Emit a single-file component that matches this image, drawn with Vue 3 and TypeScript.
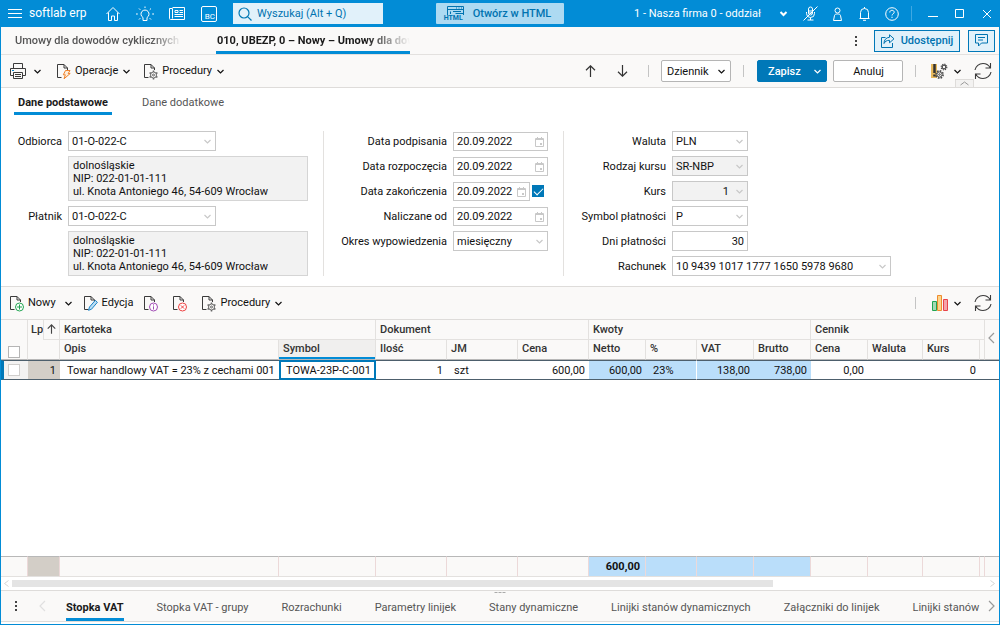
<script setup lang="ts">
import { h, ref } from 'vue'

const chevronPaths: Record<string, string> = {
  down: 'M1.500 3l3 3 3-3',
  left: 'M7 1l-5 5 5 5',
  right: 'M2 1l5 5-5 5',
}

const Chevron = (props: { dir?: string; bold?: boolean }) => {
  const dir = props.dir ?? 'down'
  const height = dir === 'down' ? 9 : 12
  return h(
    'svg',
    {
      width: 9,
      height,
      viewBox: `0 0 9 ${height}`,
      fill: 'none',
      stroke: 'currentColor',
      'stroke-width': props.bold ? 2 : 1.2,
      'aria-hidden': 'true',
    },
    [h('path', { d: chevronPaths[dir] })],
  )
}
Chevron.props = { dir: String, bold: Boolean }

const DocIcon = (props: { kind: string }) => {
  const line = (d: string, stroke: string, extra = {}) => h('path', { d, stroke, ...extra })
  const base = line('M5.500 14.500H1.500V1.500h6.500l3.500 3.500V7M8 1.500v3.500h3.500', '#3b3b3b')
  const badge = (stroke: string, d: string) => [
    h('circle', { cx: 10.5, cy: 12, r: 4, stroke, fill: '#fff' }),
    line(d, stroke),
  ]
  const kinds: Record<string, unknown[]> = {
    bolt: [line('M9.500 7.500h4.500l-1.800 3h2L8 15.800l1.300-4h-2z', '#f0832b', { fill: '#fdeedd' })],
    gear: [
      h('circle', { cx: 10.5, cy: 12, r: 3, stroke: '#666', fill: '#faf9f8' }),
      h('circle', { cx: 10.5, cy: 12, r: 1, stroke: '#666' }),
      line('M10.500 7.500v1.500M10.500 15v1.500M6.600 9.700l1.300.8M13.100 13.500l1.300.8M6.600 14.300l1.300-.8M13.100 10.500l1.300-.8', '#666', { 'stroke-width': 1.5 }),
    ],
    add: badge('#21a552', 'M10.500 9.500v5M8 12h5'),
    info: badge('#a24db5', 'M10.500 9.300v1.200M10.500 11.300v3.200'),
    remove: badge('#ee4040', 'M8.900 10.400l3.200 3.200M12.100 10.400l-3.200 3.200'),
    edit: [line('M5.500 15.300l1-3.300L12.300 5.300l2.100 2L8.500 14.200z', '#1c83c6', { fill: '#bcdff5' })],
  }
  return h(
    'svg',
    { width: 15, height: 17, viewBox: '0 0 15 17', fill: 'none', 'stroke-width': 1, 'aria-hidden': 'true' },
    [base, ...(kinds[props.kind] as [])],
  )
}
DocIcon.props = { kind: String }

const RefreshIcon = () =>
  h(
    'svg',
    { width: 18, height: 18, viewBox: '0 0 18 18', fill: 'none', stroke: '#3b3b3b', 'stroke-width': 1.1, 'aria-hidden': 'true' },
    [h('path', { d: 'M1 8C1.6 4.200 5 1.500 9 1.500c3 0 5.600 1.500 7 4M16.500 1v5h-5M17 10c-.6 3.800-4 6.500-8 6.500-3 0-5.600-1.500-7-4M1.500 17v-5h5' })],
  )

const parties = [
  { id: 'odbiorca', label: 'Odbiorca' },
  { id: 'platnik', label: 'Płatnik' },
]

const dates = [
  { id: 'podpisania', label: 'Data podpisania', check: false },
  { id: 'rozpoczecia', label: 'Data rozpoczęcia', check: false },
  { id: 'zakonczenia', label: 'Data zakończenia', check: true },
  { id: 'naliczane', label: 'Naliczane od', check: false },
]

const payments = [
  { id: 'waluta', label: 'Waluta', value: 'PLN' },
  { id: 'rodzaj', label: 'Rodzaj kursu', value: 'SR-NBP', off: true },
  { id: 'kurs', label: 'Kurs', value: '1', off: true, right: true },
  { id: 'symbol', label: 'Symbol płatności', value: 'P' },
  { id: 'dni', label: 'Dni płatności', value: '30', right: true, plain: true },
  { id: 'rachunek', label: 'Rachunek', value: '10 9439 1017 1777 1650 5978 9680', wide: true },
]

const groups = [
  { label: 'Kartoteka', span: 2 },
  { label: 'Dokument', span: 3 },
  { label: 'Kwoty', span: 4 },
  { label: 'Cennik', span: 4 },
]

const columns = [
  { label: 'Opis', value: 'Towar handlowy VAT = 23% z cechami 001', cls: '' },
  { label: 'Symbol', value: 'TOWA-23P-C-001', cls: 'focused' },
  { label: 'Ilość', value: '1', cls: 'num' },
  { label: 'JM', value: 'szt', cls: '' },
  { label: 'Cena', value: '600,00', cls: 'num' },
  { label: 'Netto', value: '600,00', cls: 'num blue', total: '600,00' },
  { label: '%', value: '23%', cls: 'blue split' },
  { label: 'VAT', value: '138,00', cls: 'num blue' },
  { label: 'Brutto', value: '738,00', cls: 'num blue' },
  { label: 'Cena', value: '0,00', cls: 'num' },
  { label: 'Waluta', value: '', cls: '' },
  { label: 'Kurs', value: '0', cls: 'num' },
  { label: '', value: '', cls: '' },
]

const bottomTabs = [
  'Stopka VAT',
  'Stopka VAT - grupy',
  'Rozrachunki',
  'Parametry linijek',
  'Stany dynamiczne',
  'Linijki stanów dynamicznych',
  'Załączniki do linijek',
  'Linijki stanów',
]
const activeBottom = ref(0)
const endChecked = ref(true)
</script>

<template>
  <div class="window">
    <header class="topbar">
      <div class="top-left">
        <button class="menu" aria-label="Menu">
          <svg width="14" height="10" viewBox="0 0 14 10" stroke="#fff"><path d="M0 .5h14M0 4.500h14M0 8.500h14" /></svg>
        </button>
        <a class="brand" href="#">softlab erp</a>
        <button class="top-icon" aria-label="Start">
          <svg width="16" height="16" viewBox="0 0 16 16" fill="none" stroke="#fff"><path d="M1.500 8L8 1.500 14.500 8M3.500 6.500v8h3V10h3v4.500h3v-8" /></svg>
        </button>
        <button class="top-icon" aria-label="Podpowiedzi">
          <svg width="20" height="16" viewBox="0 0 20 16" fill="none" stroke="#fff"><path d="M8 11.500a4 4 0 1 1 4 0v3H8zM10 .5v1.500M4 2.500l1.300 1.300M16 2.500l-1.300 1.300M1 8h1.800M17.200 8H19M4 13.500l1.300-1.300M16 13.500l-1.300-1.300" /></svg>
        </button>
        <button class="top-icon" aria-label="Aktualności">
          <svg width="17" height="14" viewBox="0 0 17 14" fill="none" stroke="#fff"><path d="M3.500.5h12v12H1.500a1 1 0 0 1-1-1v-10h3v10M5.500 9.500h8.500M5.500 7.500h8.500M10.500 3.500H14M10.500 5.500H14M6 3.500h3v2H6z" /></svg>
        </button>
        <button class="top-icon" aria-label="BC"><span class="bc">BC</span></button>
        <label class="search">
          <svg width="14" height="14" viewBox="0 0 14 14" fill="none" stroke="#0078b4" stroke-width="1.200"><circle cx="6" cy="6" r="5" /><path d="M9.800 9.800l3.700 3.700" /></svg>
          <input type="search" aria-label="Wyszukaj" placeholder="Wyszukaj (Alt + Q)" />
        </label>
      </div>
      <button class="html-btn">
        <span class="html-icon">
          <svg width="17" height="9" viewBox="0 0 17 9" fill="none" stroke="#0073b0"><path d="M.5 9V.5h16V9M.5 3.500h16M3.500 8V5.500M6 5.500h8M8.500 7.500h8M9 2h1M11.500 2h1M14 2h1" /></svg>
          <small>HTML</small>
        </span>
        Otwórz w HTML
      </button>
      <div class="top-right">
        <button class="company">1 - Nasza firma 0 - oddział <Chevron bold /></button>
        <button class="sys" aria-label="Mikrofon">
          <svg width="15" height="15" viewBox="0 0 15 15" fill="none" stroke="#fff"><path d="M5.500 3a2 2 0 0 1 4 0v4a2 2 0 0 1-4 0zM3.500 6v1.500a4 4 0 0 0 8 0V6M7.500 11.500v2.500M4.500 14h6M14.500.5l-14 14M5.500 5h4M5.500 7h4" /></svg>
        </button>
        <button class="sys" aria-label="Użytkownik">
          <svg width="11" height="14" viewBox="0 0 11 14" fill="none" stroke="#fff"><circle cx="5.500" cy="3.500" r="2.500" /><path d="M1.500 13.500l1-5c0-1 1.300-1.500 3-1.500s3 .5 3 1.500l1 5z" /></svg>
        </button>
        <button class="sys" aria-label="Powiadomienia">
          <svg width="11" height="14" viewBox="0 0 11 14" fill="none" stroke="#fff"><path d="M.5 11.500h10M1.500 11V5.500a4 4 0 0 1 8 0V11M4 13.300h3M5.500 0v1.500" /></svg>
        </button>
        <button class="sys" aria-label="Pomoc">
          <svg width="14" height="14" viewBox="0 0 14 14" fill="none" stroke="#fff"><circle cx="7" cy="7" r="6.300" /><path d="M4.800 5.500c0-1.500 1-2.200 2.200-2.200s2.200.7 2.200 2c0 1.500-2.200 1.600-2.200 3.200M7 9.700v1.300" /></svg>
        </button>
        <i class="top-sep"></i>
        <button class="sys" aria-label="Minimalizuj">
          <svg width="10" height="10" viewBox="0 0 10 10" stroke="#fff"><path d="M0 7.500h10" /></svg>
        </button>
        <button class="sys" aria-label="Maksymalizuj">
          <svg width="10" height="10" viewBox="0 0 10 10" fill="none" stroke="#fff"><path d="M.5.5h8v8h-8z" /></svg>
        </button>
        <button class="sys" aria-label="Zamknij">
          <svg width="10" height="10" viewBox="0 0 10 10" stroke="#fff"><path d="M1 1l8 8M9 1L1 9" /></svg>
        </button>
      </div>
    </header>

    <nav class="docs">
      <a class="doc" href="#"><span>Umowy dla dowodów cyklicznych</span></a>
      <a class="doc current" href="#"><span>010, UBEZP, 0 – Nowy – Umowy dla dowodów</span></a>
      <button class="kebab push" aria-label="Więcej"><i></i><i></i><i></i></button>
      <button class="share">
        <svg width="14" height="14" viewBox="0 0 14 14" fill="none" stroke="#0073b0"><path d="M4.500 3.500h-4v10h11V9M8.500.8l4.500 4-4.500 4V6.300C5.500 6.300 4 7.500 3 9.500 3 6 5 3.500 8.500 3.300z" /></svg>
        Udostępnij
      </button>
      <button class="chat" aria-label="Komentarze">
        <svg width="15" height="13" viewBox="0 0 15 13" fill="none" stroke="#0073b0"><path d="M1.500.5h12v8.500h-6l-3 3V9h-3zM4 3.500h7M4 6h5" /></svg>
      </button>
    </nav>

    <div class="toolbar first">
      <button class="tool print" aria-label="Drukuj">
        <svg width="16" height="16" viewBox="0 0 16 16" fill="none" stroke="#3b3b3b"><path d="M3.500 5V.5h9V5M3.500 12.500h-3v-7h15v7h-3M3.500 9.500h9v6h-9zM5 11.500h6M5 13.500h6" /><path d="M2 7.500h2" stroke="#0a84c9" /></svg>
        <Chevron />
      </button>
      <button class="tool"><DocIcon kind="bolt" /><span>Operacje</span><Chevron /></button>
      <button class="tool"><DocIcon kind="gear" /><span>Procedury</span><Chevron /></button>
      <div class="tool-right">
        <button class="arrow" aria-label="Poprzedni">
          <svg width="11" height="12" viewBox="0 0 11 12" fill="none" stroke="#333" stroke-width="1.200"><path d="M5.500 12V1M1 5.200L5.500.8 10 5.200" /></svg>
        </button>
        <button class="arrow" aria-label="Następny">
          <svg width="11" height="12" viewBox="0 0 11 12" fill="none" stroke="#333" stroke-width="1.200"><path d="M5.500 0v11M1 6.800l4.500 4.400L10 6.800" /></svg>
        </button>
        <i class="sep"></i>
        <button class="btn journal">Dziennik <Chevron /></button>
        <i class="sep"></i>
        <button class="btn primary"><span>Zapisz</span><Chevron /></button>
        <button class="btn cancel">Anuluj</button>
        <i class="sep"></i>
        <button class="tool-end" aria-label="Ustawienia">
          <svg width="17" height="17" viewBox="0 0 17 17" fill="none" stroke="#4a4a4a"><path d="M0 1h6v14H0z" fill="#e8b95c" stroke="none" /><path d="M3.500 1v9M3.500 11.500v2" stroke="#333" stroke-width="2.500" /><circle cx="8.500" cy="11.500" r="3.600" stroke-dasharray="1.600 1.200" stroke-width="1.600" /><circle cx="8.500" cy="11.500" r="2.600" fill="#faf9f8" /><circle cx="8.500" cy="11.500" r=".8" /><circle cx="13" cy="4" r="2.800" stroke-dasharray="1.200 1" stroke-width="1.200" /><circle cx="13" cy="4" r="1.800" stroke-width="1.200" fill="#faf9f8" /></svg>
          <Chevron />
        </button>
        <button class="refresh" aria-label="Odśwież"><RefreshIcon /></button>
      </div>
      <button class="fold" aria-label="Zwiń">
        <svg width="9" height="5" viewBox="0 0 9 5" fill="none" stroke="#999"><path d="M.5 4l4-3 4 3" /></svg>
      </button>
    </div>

    <nav class="subtabs">
      <a class="on" href="#">Dane podstawowe</a>
      <a href="#">Dane dodatkowe</a>
    </nav>

    <form class="form">
      <section class="fields parties">
        <template v-for="p in parties" :key="p.id">
          <label :for="p.id">{{ p.label }}</label>
          <div class="combo party">
            <select :id="p.id"><option>01-O-022-C</option></select>
            <Chevron />
          </div>
          <div class="address">dolnośląskie<br />NIP: 022-01-01-111<br />ul. Knota Antoniego 46, 54-609 Wrocław</div>
        </template>
      </section>

      <section class="fields terms">
        <template v-for="d in dates" :key="d.id">
          <label :for="d.id">{{ d.label }}</label>
          <div class="date-row">
            <div class="combo date">
              <input :id="d.id" type="text" value="20.09.2022" />
              <svg width="9" height="10" viewBox="0 0 9 10" fill="none" stroke="#c8c8c8"><path d="M.5 1.500h8v8h-8zM.5 2.500h8M2.500 0v2M6.500 0v2" /><path d="M5 6h2v2H5z" fill="#c8c8c8" stroke="none" /></svg>
            </div>
            <input v-if="d.check" v-model="endChecked" type="checkbox" class="tick" aria-label="Data zakończenia aktywna" />
          </div>
        </template>
        <label for="okres">Okres wypowiedzenia</label>
        <div class="combo">
          <select id="okres"><option>miesięczny</option></select>
          <Chevron />
        </div>
      </section>

      <section class="fields payment">
        <template v-for="f in payments" :key="f.id">
          <label :for="f.id">{{ f.label }}</label>
          <div class="combo" :class="{ off: f.off, wide: f.wide, right: f.right, plain: f.plain }">
            <input v-if="f.plain || f.right" :id="f.id" type="text" :value="f.value" :disabled="f.off" />
            <select v-else :id="f.id" :disabled="f.off"><option>{{ f.value }}</option></select>
            <Chevron v-if="!f.plain" />
          </div>
        </template>
      </section>
    </form>

    <div class="toolbar second">
      <button class="tool new"><DocIcon kind="add" /><span>Nowy</span><Chevron /></button>
      <button class="tool"><DocIcon kind="edit" /><span>Edycja</span></button>
      <button class="tool icon-only" aria-label="Informacje"><DocIcon kind="info" /></button>
      <button class="tool icon-only" aria-label="Usuń"><DocIcon kind="remove" /></button>
      <button class="tool"><DocIcon kind="gear" /><span>Procedury</span><Chevron /></button>
      <div class="tool-right">
        <i class="sep"></i>
        <button class="tool-end" aria-label="Wykres">
          <svg width="17" height="16" viewBox="0 0 17 16"><path d="M1.500 6.500h4v9h-4z" fill="#a5d9b5" stroke="#21a552" /><path d="M6.500.5h4v15h-4z" fill="#fbd58d" stroke="#ef8b2c" /><path d="M12.500 4.500h4v11h-4z" fill="#f5a3a8" stroke="#e8434b" /></svg>
          <Chevron />
        </button>
        <button class="refresh" aria-label="Odśwież"><RefreshIcon /></button>
      </div>
    </div>

    <div class="grid">
      <table>
        <colgroup>
          <col class="c-check" /><col class="c-lp" /><col class="c-desc" /><col class="c-symbol" />
          <col class="c-doc" /><col class="c-doc" /><col class="c-doc" />
          <col class="c-sum" /><col class="c-pct" /><col class="c-sum" /><col class="c-sum" />
          <col class="c-sum" /><col class="c-cur" /><col class="c-sum" /><col class="c-rest" /><col class="c-nav" />
        </colgroup>
        <thead>
          <tr>
            <th rowspan="2" class="check-head"><input type="checkbox" aria-label="Zaznacz wszystkie" /></th>
            <th rowspan="2" class="lp-head">
              <div>
                <span>Lp</span>
                <svg width="16" height="19" viewBox="0 0 16 19" fill="none" stroke="#444" stroke-width="1.200"><path d="M8 14V4.500M4 8.500l4-4 4 4" /></svg>
              </div>
            </th>
            <th v-for="g in groups" :key="g.label" :colspan="g.span">{{ g.label }}</th>
            <th rowspan="2" class="nav-head"><button aria-label="Przewiń w lewo"><Chevron dir="left" /></button></th>
          </tr>
          <tr>
            <th v-for="(c, i) in columns.slice(0, 12)" :key="i" :class="c.cls">{{ c.label }}</th>
            <th></th>
          </tr>
        </thead>
        <tbody>
          <tr class="row">
            <td class="check-cell"><input type="checkbox" aria-label="Zaznacz pozycję 1" /></td>
            <td class="lp-cell">1</td>
            <td v-for="(c, i) in columns" :key="i" :class="c.cls">{{ c.value }}</td>
            <td></td>
          </tr>
          <tr class="filler"><td colspan="16"></td></tr>
        </tbody>
        <tfoot>
          <tr>
            <td></td>
            <td class="lp-cell"></td>
            <td v-for="(c, i) in columns" :key="i" :class="c.cls">{{ c.total }}</td>
            <td></td>
          </tr>
        </tfoot>
      </table>
    </div>

    <div class="scroller">
      <svg width="5" height="7" viewBox="0 0 5 7" fill="none" stroke="#d5d5d5"><path d="M4.500.5l-4 3 4 3" /></svg>
      <div class="track"><div class="thumb"></div></div>
      <svg width="5" height="7" viewBox="0 0 5 7" fill="none" stroke="#d5d5d5"><path d="M.5.5l4 3-4 3" /></svg>
    </div>

    <nav class="bottom">
      <i class="grip"></i>
      <button class="kebab" aria-label="Więcej kart"><i></i><i></i><i></i></button>
      <button class="prev" aria-label="Poprzednie karty"><Chevron dir="left" /></button>
      <div class="tabs">
        <button v-for="(t, i) in bottomTabs" :key="t" :class="{ on: i === activeBottom }" @click="activeBottom = i">{{ t }}</button>
      </div>
      <button class="next" aria-label="Następne karty"><Chevron dir="right" /></button>
    </nav>
  </div>
</template>

<style>
body {
  margin: 0;
}
</style>

<style scoped>
* {
  box-sizing: border-box;
}
.window {
  display: flex;
  flex-direction: column;
  min-height: 100vh;
  border: 1px solid #028cd6;
  border-top: 0;
  background: #fff;
  color: #111;
  font-family: Roboto, "Liberation Sans", sans-serif;
  font-size: 11px;
  line-height: 13px;
}
button,
input,
select {
  margin: 0;
  padding: 0;
  border: 0;
  background: none;
  color: inherit;
  font: inherit;
}
a {
  color: inherit;
  text-decoration: none;
}
svg {
  display: block;
  flex: none;
}

/* top bar */
.topbar {
  display: grid;
  grid-template-columns: 1fr auto 1fr;
  align-items: center;
  height: 27px;
  margin: 0 -1px;
  background: #028cd6;
  color: #fff;
}
.top-left,
.top-right {
  display: flex;
  align-items: center;
}
.top-right {
  justify-content: flex-end;
}
.menu {
  margin: 0 7px 0 8px;
}
.brand {
  width: 59px;
  margin-right: 9px;
  font-size: 12px;
  white-space: nowrap;
}
.top-icon {
  display: flex;
  justify-content: center;
  width: 32px;
}
.bc {
  display: flex;
  align-items: flex-end;
  justify-content: flex-end;
  width: 16px;
  height: 16px;
  padding-right: 1px;
  border: 1px solid #fff;
  border-radius: 2px;
  font-size: 8px;
  line-height: 9px;
}
.search {
  display: flex;
  align-items: center;
  gap: 5px;
  width: 150px;
  height: 21px;
  margin-left: 8px;
  padding-left: 5px;
  background: #e1f1fa;
  color: #0073b0;
}
.search input {
  flex: 1;
  min-width: 0;
  outline: 0;
}
.search input::placeholder {
  color: #0073b0;
}
.html-btn {
  display: flex;
  align-items: center;
  gap: 9px;
  height: 21px;
  padding: 0 13px 0 8px;
  border-radius: 1px;
  background: #addaf2;
  color: #0073b0;
  font-weight: 500;
}
.html-icon {
  display: flex;
  flex-direction: column;
  align-items: flex-end;
  width: 20px;
}
.html-icon small {
  align-self: flex-start;
  font-size: 7px;
  font-weight: 700;
  line-height: 7px;
}
.company {
  display: flex;
  align-items: center;
  gap: 18px;
  padding-right: 9px;
  white-space: nowrap;
}
.sys {
  display: flex;
  justify-content: center;
  width: 27px;
}
.top-sep {
  width: 1px;
  height: 15px;
  margin: 0 7px 0 6px;
  background: #3fa8e2;
}

/* document tabs */
.docs {
  display: flex;
  align-items: center;
  height: 28px;
  padding-right: 4px;
  border-bottom: 1px solid #e3e1df;
  background: #faf9f8;
}
.doc {
  align-self: stretch;
  margin-left: 14px;
  width: 167px;
  color: #555;
  font-weight: 500;
  line-height: 28px;
}
.doc span {
  display: block;
  overflow: hidden;
  white-space: nowrap;
  mask-image: linear-gradient(to right, #000 calc(100% - 30px), transparent);
}
.doc.current {
  width: 194px;
  height: 27px;
  margin-left: 34px;
  border-bottom: 3px solid #028cd6;
  color: #1b1b1b;
  font-weight: 700;
}
.doc.current span {
  height: 24px;
  padding-left: 1px;
  mask-image: linear-gradient(to right, #000 calc(100% - 44px), transparent);
}
.kebab {
  display: flex;
  flex-direction: column;
  gap: 2px;
  padding: 0 4px;
}
.kebab i {
  width: 2px;
  height: 2px;
  background: #444;
}
.push {
  margin: 0 13px 0 auto;
}
.share,
.chat {
  display: flex;
  align-items: center;
  justify-content: center;
  height: 22px;
  border: 1px solid #0078b8;
  background: #e1f1fa;
  color: #0073b0;
  font-weight: 500;
}
.share {
  gap: 6px;
  width: 86px;
  margin-right: 8px;
}
.chat {
  width: 27px;
}

/* toolbars */
.toolbar {
  position: relative;
  display: flex;
  align-items: center;
  gap: 12px;
  height: 33px;
  padding: 0 7px 0 9px;
  border-bottom: 1px solid #dedcda;
  background: #faf9f8;
}
.toolbar.second {
  height: 34px;
  gap: 10px;
  padding-left: 8px;
  border-top: 1px solid #dedcda;
}
.tool {
  display: flex;
  align-items: center;
  gap: 4px;
}
.tool span {
  padding-bottom: 2px;
}
.tool.print {
  gap: 7px;
  margin-right: 2px;
}
.tool.new span {
  padding-right: 4px;
}
.tool.icon-only {
  margin-right: 4px;
}
.tool-right {
  display: flex;
  align-items: center;
  margin-left: auto;
}
.arrow {
  display: flex;
  justify-content: center;
  width: 32px;
}
.sep {
  width: 1px;
  height: 12px;
  margin: 0 13px 0 12px;
  background: #c4c4c4;
}
.arrow + .sep {
  margin-left: 10px;
  margin-right: 12px;
}
.btn {
  display: flex;
  align-items: center;
  justify-content: space-between;
  width: 70px;
  height: 22px;
  padding: 0 4px 0 5px;
  border: 1px solid #b5b5b5;
  border-radius: 2px;
  background: #fff;
}
.btn.primary {
  margin-right: 6px;
  padding-left: 10px;
  border-color: #0078b8;
  background: #0078b8;
  color: #fff;
  font-weight: 500;
}
.btn.cancel {
  justify-content: center;
}
.tool-end {
  display: flex;
  align-items: center;
  gap: 5px;
  margin: 0 12px 0 2px;
}
.fold {
  position: absolute;
  right: 25px;
  bottom: 0;
  display: flex;
  justify-content: center;
  align-items: center;
  width: 19px;
  height: 8px;
  border: 1px solid #dedcda;
  border-bottom: 0;
  background: #f3f2f1;
}

/* form tabs */
.subtabs {
  display: flex;
  gap: 26px;
  height: 27px;
  padding: 0 13px;
  line-height: 29px;
}
.subtabs a {
  padding: 0 4px;
  color: #555;
}
.subtabs a.on {
  border-bottom: 3px solid #028cd6;
  color: #1b1b1b;
  font-weight: 700;
}

/* form */
.form {
  display: flex;
  padding: 16px 0 10px;
}
.fields {
  display: grid;
  grid-auto-rows: 20px;
  gap: 5px 6px;
}
.fields + .fields {
  border-left: 1px solid #e3e1df;
}
.fields > label {
  line-height: 22px;
  text-align: right;
  white-space: nowrap;
}
.parties {
  grid-template: 20px 45px 20px 45px / 61px 240px;
  margin-right: 15px;
}
.terms {
  grid-template-columns: 123px 95px;
  padding-right: 15px;
}
.payment {
  grid-template-columns: 102px 219px;
}
.combo {
  position: relative;
  display: flex;
  align-items: center;
  min-width: 0;
  height: 20px;
  border: 1px solid #c8c8c8;
  background: #fff;
  color: #111;
}
.combo select,
.combo input {
  flex: 1;
  width: 100%;
  height: 100%;
  padding: 0 18px 0 3px;
  appearance: none;
  opacity: 1;
}
.combo > svg {
  position: absolute;
  right: 3px;
  color: #c8c8c8;
  pointer-events: none;
}
.combo.party {
  width: 148px;
}
.payment .combo {
  width: 76px;
}
.payment .combo.wide {
  width: 219px;
}
.combo.off {
  background: #f2f2f2;
}
.combo.right input {
  text-align: right;
}
.combo.plain input {
  padding-right: 3px;
}
.date-row {
  display: flex;
  align-items: flex-end;
  gap: 2px;
}
.combo.date {
  flex: 1;
  height: 19px;
}
.combo.date input {
  padding-right: 14px;
}
.tick {
  width: 12px;
  height: 12px;
  margin-right: 4px;
  align-self: center;
  appearance: none;
  border: 1px solid #0078b8;
}
.tick:checked {
  background: #0078b8;
}
.tick:checked::before {
  content: "";
  display: block;
  width: 8px;
  height: 4px;
  margin: 2px 1px;
  border: solid #fff;
  border-width: 0 0 1px 1px;
  transform: rotate(-45deg);
}
.address {
  grid-column: 2;
  padding: 2px 4px;
  border: 1px solid #d5d5d5;
  background: #f2f2f2;
  line-height: 13px;
}

/* data grid */
.grid {
  display: grid;
  flex: 1;
}
table {
  width: 100%;
  height: 100%;
  border-spacing: 0;
  table-layout: fixed;
}
.c-check { width: 27px; }
.c-lp { width: 32px; }
.c-desc { width: 219px; }
.c-symbol { width: 97px; }
.c-doc { width: 71px; }
.c-sum { width: 57px; }
.c-pct { width: 51px; }
.c-cur { width: 55px; }
.c-rest { width: 5px; }
.c-nav { width: 14px; }
th,
td {
  height: 20px;
  padding: 0;
  overflow: hidden;
  white-space: nowrap;
}
th {
  padding-left: 4px;
  border-right: 1px solid #e3e1df;
  border-bottom: 1px solid #e3e1df;
  background: #faf9f8;
  color: #333;
  font-weight: 500;
  text-align: left;
}
thead tr + tr th,
th[rowspan] {
  border-bottom-color: #b8b8b8;
}
thead tr + tr th {
  padding-bottom: 2px;
}
th.focused {
  background: #f0efee;
  box-shadow: inset 0 -2px #028cd6;
}
th.check-head {
  padding: 0 0 1px 7px;
  vertical-align: bottom;
}
table input {
  display: block;
  width: 12px;
  height: 12px;
  appearance: none;
  border: 1px solid #b5b5b5;
  background: #fff;
}
.row input {
  border-color: #d0cecc;
}
th.lp-head {
  padding: 0 0 0 3px;
  vertical-align: top;
}
.lp-head div {
  display: flex;
  justify-content: space-between;
  line-height: 19px;
}
.lp-head svg {
  height: 20px;
  border-left: 1px solid #e3e1df;
  border-bottom: 1px solid #e3e1df;
}
th.nav-head {
  padding-left: 2px;
  border-right: 0;
  color: #999;
  vertical-align: middle;
}
.row td {
  padding: 0 4px 0 7px;
  border: solid #4d5f6c;
  border-width: 1px 0;
}
.num {
  text-align: right;
}
thead .num {
  text-align: left;
}
td.blue {
  background: #badefa;
}
.row td.blue.split {
  border-right: 1px solid #fff;
}
.row td.check-cell {
  padding: 0 0 0 4px;
  border-left: 3px solid #0078b8;
  background: #f3f2f1;
}
td.lp-cell {
  background: #d3cec7;
  text-align: right;
}
.row td.focused {
  padding: 0 0 0 5px;
  border: 2px solid #0078b8;
}
.filler td {
  height: auto;
}
tfoot td {
  height: 21px;
  padding-right: 5px;
  border-top: 1px solid #b8b8b8;
  border-right: 1px solid #ecd9d9;
  border-bottom: 1px solid #e3e1df;
  background: #faf9f8;
  font-weight: 700;
}
tfoot td:last-child {
  border-right: 0;
}

/* horizontal scroll */
.scroller {
  display: flex;
  align-items: center;
  gap: 3px;
  height: 13px;
  padding: 0 4px 0 3px;
}
.track {
  flex: 1;
}
.thumb {
  width: 78%;
  height: 7px;
  background: #e4e4e4;
}

/* bottom tabs */
.bottom {
  position: relative;
  display: flex;
  align-items: center;
  height: 32px;
  margin-bottom: 2px;
  padding: 0 3px 0 10px;
  border-top: 1px solid #dedcda;
  border-bottom: 1px solid #dedcda;
  background: #faf9f8;
}
.grip {
  position: absolute;
  top: 1px;
  left: 50%;
  width: 11px;
  border-top: 1px dashed #aaa;
  transform: translateX(-50%);
}
.prev {
  margin: 0 19px 0 17px;
  color: #e0e0e0;
}
.next {
  margin-left: 7px;
  color: #999;
}
.tabs {
  display: flex;
  flex: 1;
  align-self: stretch;
  gap: 33px;
  min-width: 0;
  overflow: hidden;
}
.tabs button {
  flex: none;
  padding-top: 5px;
  border-bottom: 3px solid transparent;
  color: #555;
  white-space: nowrap;
}
.tabs button.on {
  border-color: #028cd6;
  color: #1b1b1b;
  font-weight: 700;
}
</style>
